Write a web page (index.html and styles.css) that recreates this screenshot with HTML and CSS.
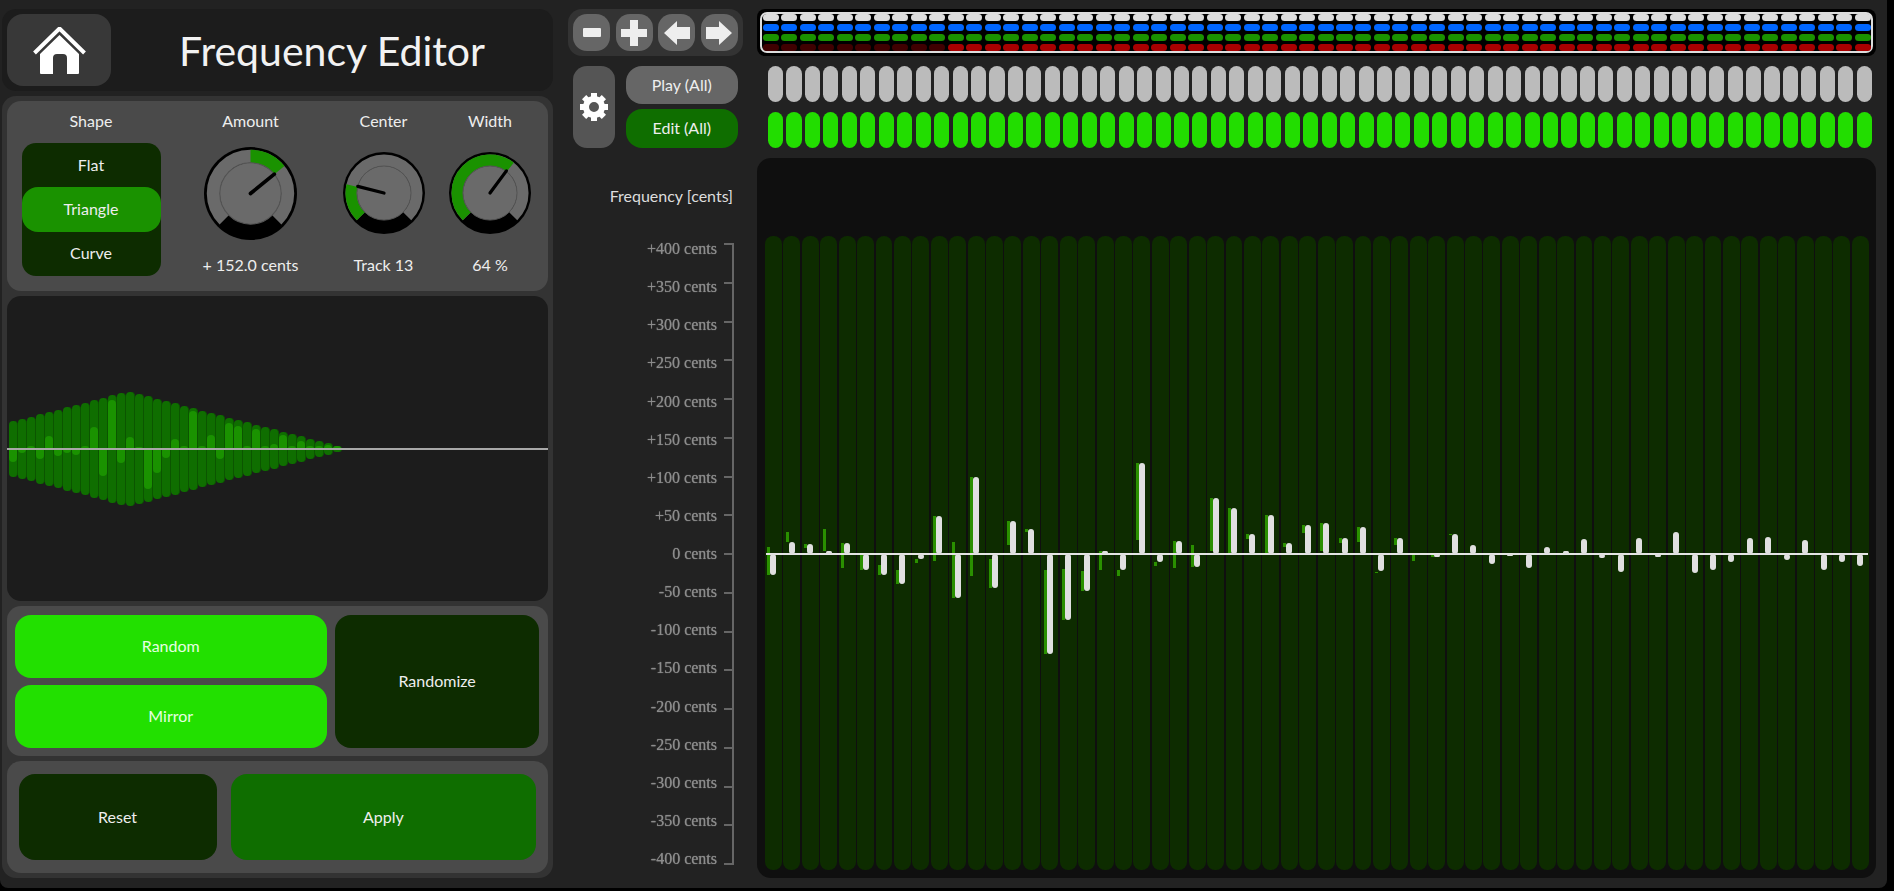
FILE: index.html
```html
<!DOCTYPE html>
<html lang="en">
<head>
<meta charset="utf-8">
<title>Frequency Editor</title>
<link rel="stylesheet" href="styles.css">
</head>
<body>
<div class="app">
  <aside class="left">
    <header class="head">
      <button class="home" aria-label="Home">
        <svg width="53" height="47" viewBox="0 0 53 47">
          <polyline class="roof" points="1.5,26 26.5,1.5 51.5,26"/>
          <path class="white" d="M7 27 L26.5 8 L46 27 V46 Q46 47 45 47 H34 V31 Q34 27 30 27 H24 Q20 27 20 31 V47 H8 Q7 47 7 46 Z"/>
        </svg>
      </button>
      <h1 class="title">Frequency Editor</h1>
    </header>
    <div class="stack">
      <section class="params">
        <div class="shape-col">
          <div class="lbl">Shape</div>
          <div class="shapes">
            <div class="shape">Flat</div>
            <div class="shape active">Triangle</div>
            <div class="shape">Curve</div>
          </div>
        </div>
        <div class="knob-col amount">
          <div class="lbl">Amount</div>
          <div class="knob-area">
            <svg class="knob big" viewBox="-50 -50 100 100">
              <circle class="k-base" r="50"/>
              <circle class="k-ring" r="40" pathLength="360" stroke-dasharray="270 90" transform="rotate(135)"/>
              <circle class="k-val" r="40" pathLength="360" stroke-dasharray="51 309" transform="rotate(-90)"/>
              <circle class="k-in" r="33"/>
              <line class="k-needle" x1="0" y1="0" x2="25.6" y2="-20.8"/>
            </svg>
          </div>
          <div class="lbl">+ 152.0 cents</div>
        </div>
        <div class="knob-col center">
          <div class="lbl">Center</div>
          <div class="knob-area">
            <svg class="knob small" viewBox="-50 -50 100 100">
              <circle class="k-base" r="50"/>
              <circle class="k-ring" r="40" pathLength="360" stroke-dasharray="270 90" transform="rotate(135)"/>
              <circle class="k-val" r="40" pathLength="360" stroke-dasharray="58 302" transform="rotate(135)"/>
              <circle class="k-in" r="33"/>
              <line class="k-needle" x1="0" y1="0" x2="-32" y2="-8"/>
            </svg>
          </div>
          <div class="lbl">Track 13</div>
        </div>
        <div class="knob-col width">
          <div class="lbl">Width</div>
          <div class="knob-area">
            <svg class="knob small" viewBox="-50 -50 100 100">
              <circle class="k-base" r="50"/>
              <circle class="k-ring" r="40" pathLength="360" stroke-dasharray="270 90" transform="rotate(135)"/>
              <circle class="k-val" r="40" pathLength="360" stroke-dasharray="173 187" transform="rotate(135)"/>
              <circle class="k-in" r="33"/>
              <line class="k-needle" x1="0" y1="0" x2="20" y2="-27"/>
            </svg>
          </div>
          <div class="lbl">64 %</div>
        </div>
      </section>
      <section class="wave" id="wave"><div class="wave-line"></div></section>
      <section class="random">
        <button class="btn bright">Random</button>
        <button class="btn dark tall">Randomize</button>
        <button class="btn bright">Mirror</button>
      </section>
      <section class="actions">
        <button class="btn dark reset">Reset</button>
        <button class="btn mid apply">Apply</button>
      </section>
    </div>
  </aside>

  <div class="middle">
    <div class="toolbar">
      <button class="tool" aria-label="Remove">
        <svg width="18" height="9" viewBox="0 0 18 9"><rect class="glyph" width="18" height="9" rx="1"/></svg>
      </button>
      <button class="tool" aria-label="Add">
        <svg width="26" height="26" viewBox="0 0 26 26"><path class="glyph" d="M9 0H17V9H26V17H17V26H9V17H0V9H9Z"/></svg>
      </button>
      <button class="tool" aria-label="Previous">
        <svg width="26" height="24" viewBox="0 0 26 24"><path class="glyph" d="M13 0V6H26V18H13V24L0 12Z"/></svg>
      </button>
      <button class="tool" aria-label="Next">
        <svg width="26" height="24" viewBox="0 0 26 24"><path class="glyph" d="M13 0V6H0V18H13V24L26 12Z"/></svg>
      </button>
    </div>
    <div class="modes">
      <button class="gear" aria-label="Settings">
        <svg width="28" height="28" viewBox="-14 -14 28 28">
          <g class="teeth">
            <rect x="-3" y="-14" width="6" height="6"/>
            <rect x="-3" y="-14" width="6" height="6" transform="rotate(45)"/>
            <rect x="-3" y="-14" width="6" height="6" transform="rotate(90)"/>
            <rect x="-3" y="-14" width="6" height="6" transform="rotate(135)"/>
            <rect x="-3" y="-14" width="6" height="6" transform="rotate(180)"/>
            <rect x="-3" y="-14" width="6" height="6" transform="rotate(225)"/>
            <rect x="-3" y="-14" width="6" height="6" transform="rotate(270)"/>
            <rect x="-3" y="-14" width="6" height="6" transform="rotate(315)"/>
          </g>
          <circle class="gear-ring" r="8"/>
        </svg>
      </button>
      <div class="mode-stack">
        <button class="mode play">Play (All)</button>
        <button class="mode edit">Edit (All)</button>
      </div>
    </div>
    <div class="axis-title">Frequency [cents]</div>
    <div class="axis">
      <div class="axis-labels" id="axisLabels"></div>
      <div class="axis-ticks" id="axisTicks"></div>
    </div>
  </div>

  <main class="right">
    <div class="overview">
      <div class="overview-in" id="overview"></div>
    </div>
    <div class="pills" id="playRow"></div>
    <div class="pills" id="editRow"></div>
    <div class="chart">
      <div class="tracks" id="tracks"><div class="zero"></div></div>
    </div>
  </main>
</div>
<script src="script.js"></script>
</body>
</html>
```

FILE: styles.css
```css
* { box-sizing: border-box; }
html, body { margin: 0; height: 100%; background: #000; overflow: hidden; }
body { font-family: "Lato", "Noto Sans", sans-serif; font-size: 16px; color: #eee; }
button { font: inherit; color: inherit; border: 0; padding: 0; cursor: pointer; }

.app { width: 1887px; height: 888px; background: #222; display: flex; padding-top: 9px; border-radius: 0 0 8px 8px; }

.left { width: 551px; flex: none; margin-left: 2px; display: flex; flex-direction: column; gap: 5px; }
.head { height: 82px; background: #1c1c1c; border-radius: 14px; display: flex; align-items: center; padding-left: 5px; }
.home { width: 104px; height: 72px; background: #383838; border-radius: 16px; display: flex; align-items: center; justify-content: center; }
.roof { fill: none; stroke: #fff; stroke-width: 4; }
.white { fill: #fff; }
.title { flex: 1; margin: 0; text-align: center; font-size: 41px; font-weight: 400; color: #f2f2f2; }

.stack { height: 782px; background: #333; border-radius: 14px; padding: 5px; display: flex; flex-direction: column; gap: 5px; }
.params { height: 190px; flex: none; background: #4a4a4a; border-radius: 14px; padding: 10px 0 0 14.5px; display: flex; }
.lbl { height: 20px; line-height: 20px; text-align: center; white-space: nowrap; }
.shape-col { width: 139px; }
.shapes { margin-top: 12px; height: 133px; background: #0d2c00; border-radius: 14px; display: grid; grid-template-rows: 1fr 1fr 1fr; }
.shape { display: flex; align-items: center; justify-content: center; border-radius: 14px; padding-bottom: 2px; }
.shape.active { background: #1a9200; border-radius: 16px; }
.knob-col { width: 90px; }
.knob-col.amount { width: 100px; margin-left: 40px; }
.knob-col.center { margin-left: 38px; }
.knob-col.width { margin-left: 16.5px; }
.knob-area { height: 124px; display: flex; align-items: center; justify-content: center; }
.knob { display: block; }
.knob.big { width: 93px; height: 93px; }
.knob.small { width: 82px; height: 82px; }
.k-base { fill: #000; }
.k-ring { fill: none; stroke: #6a6a6a; stroke-width: 14; }
.k-val { fill: none; stroke: #1a9200; stroke-width: 14; }
.k-in { fill: #6a6a6a; stroke: #555; stroke-width: 1.2; }
.k-needle { stroke: #000; stroke-width: 4; stroke-linecap: round; }

.wave { height: 305px; flex: none; background: #1c1c1c; border-radius: 14px; position: relative; display: flex; align-items: stretch; padding-left: 2px; }
.wave-cell { width: 9px; flex: none; position: relative; display: flex; align-items: center; justify-content: flex-start; }
.wave-env { width: 9px; border-radius: 4px; background: #0f6e00; border-right: 1px solid #0b5500; position: relative; }
.wave-val { position: absolute; left: 0; width: 8px; background: #1a9200; }
.wave-val.up { border-radius: 4px 4px 0 0; }
.wave-val.down { border-radius: 0 0 4px 4px; }
.wave-line { position: absolute; z-index: 1; left: 0; right: 0; top: 152px; height: 2px; background: #a8a8a8; }

.random { height: 150px; flex: none; background: #4a4a4a; border-radius: 14px; padding: 9px 8px 8px 7.5px; display: grid; grid-template-columns: 312.5px 204.7px; grid-template-rows: 63px 63px; gap: 7px 7.8px; }
.btn { border-radius: 16px; padding-bottom: 2px; }
.bright { background: #22e000; color: #e6ffe0; }
.dark { background: #0d2c00; }
.mid { background: #0f6e00; }
.tall { grid-row: span 2; }
.actions { height: 112px; flex: none; background: #4a4a4a; border-radius: 14px; padding: 13px 12.3px 13px 11.6px; display: flex; gap: 14.6px; }
.reset { width: 198px; }
.apply { flex: 1; }

.middle { width: 175px; flex: none; margin-left: 15px; }
.toolbar { height: 47px; background: #333; border-radius: 14px; padding: 5px; display: flex; justify-content: space-between; }
.tool { width: 37px; height: 37px; background: #666; border-radius: 14px; display: flex; align-items: center; justify-content: center; }
.glyph { fill: #eee; }
.modes { margin-top: 10px; padding: 0 5px; display: flex; gap: 10.5px; height: 82px; }
.gear { width: 42px; background: #555; border-radius: 14px; display: flex; align-items: center; justify-content: center; }
.teeth { fill: #fff; }
.gear-ring { fill: none; stroke: #fff; stroke-width: 6; }
.mode-stack { flex: 1; display: flex; flex-direction: column; gap: 5px; }
.mode { flex: 1; border-radius: 16px; }
.mode.play { background: #666; }
.mode.edit { background: #0f6e00; padding-bottom: 2px; }
.axis-title { margin-top: 38px; height: 20px; line-height: 20px; text-align: right; padding-right: 10px; color: #ddd; }
.axis { margin-top: 34px; height: 628px; display: flex; justify-content: flex-end; gap: 7px; padding-right: 9px; }
.axis-labels { display: flex; flex-direction: column; justify-content: space-between; align-items: flex-end; }
.axis-label { font-family: "Liberation Serif", serif; font-size: 16px; line-height: 18px; color: #8c8c8c; text-shadow: 0 0 1px #8c8c8c; filter: blur(0.6px); }
.axis-ticks { width: 10px; height: 622px; margin-top: 3px; border-right: 2px solid #666; display: flex; flex-direction: column; justify-content: space-between; }
.axis-tick { height: 2px; background: #666; }

.right { width: 1119px; flex: none; margin-left: 14px; display: flex; flex-direction: column; }
.overview { height: 47px; background: #000; border-radius: 8px; padding: 3px; flex: none; }
.overview-in { height: 41px; border: 2px solid #ddd; border-radius: 7px; padding: 0 0.5px; display: flex; flex-direction: column; gap: 3px; justify-content: flex-start; }
.ov-row { height: 7px; display: flex; gap: 2.5px; flex: none; }
.ov-cell { flex: 1; border-radius: 4px; }
.ov-gray { background: #ddd; }
.ov-blue { background: #0066ff; }
.ov-green { background: #1a9200; }
.ov-red { background: #a80000; }
.ov-red.off { background: #3f0000; }
.pills { height: 36px; margin: 10px 4.5px 0 11px; display: flex; gap: 3.4px; flex: none; }
.pill { flex: 1; border-radius: 8px; }
#playRow .pill { background: #bbb; }
#editRow .pill { background: #22dd00; }
.chart { margin-top: 10px; height: 720px; background: #0f0f0f; border-radius: 14px; padding: 78px 7px 8px 8px; flex: none; }
.tracks { height: 634px; display: flex; gap: 1.5px; position: relative; }
.track { flex: 1; background: #0d2c00; border-radius: 8px; position: relative; }
.zero { position: absolute; z-index: 2; left: 1px; right: 1px; top: 317px; height: 2px; background: #e4e4e4; }
.bar-w { position: absolute; z-index: 3; left: calc(50% - 3px); width: 6px; background: #e0e0e0; border-radius: 3px; }
.bar-g { position: absolute; z-index: 1; left: calc(50% - 6px); width: 3px; background: #2a9000; }
```

FILE: script.js
```javascript
var N = 60;

function el(cls, parent) {
  var d = document.createElement('div');
  d.className = cls;
  parent.appendChild(d);
  return d;
}

/* waveform preview */
var env = [28,30,32,35,37,39,42,44,46,49,51,54,56,57,55,53,50,48,46,43,41,38,36,34,31,29,27,24,22,20,17,15,13,10,8,6,3];
var val = [-13,-4,3,-10,13,-7,-4,-6,3,22,-27,49,-14,12,2,-40,-24,-9,10,3,38,3,14,-10,26,23,3,20,3,5,14,3,8,3,3,4,3];
var wave = document.getElementById('wave');
for (var i = 0; i < N; i++) {
  var cell = el('wave-cell', wave);
  if (i >= env.length) continue;
  var e = el('wave-env', cell);
  e.style.height = env[i] * 2 + 'px';
  var v = el('wave-val ' + (val[i] > 0 ? 'up' : 'down'), e);
  v.style.height = Math.abs(val[i]) + 'px';
  if (val[i] > 0) v.style.bottom = '50%'; else v.style.top = '50%';
}

/* axis */
var labels = document.getElementById('axisLabels');
var ticks = document.getElementById('axisTicks');
for (var c = 400; c >= -400; c -= 50) {
  el('axis-label', labels).textContent = (c > 0 ? '+' + c : c) + ' cents';
  el('axis-tick', ticks);
}

/* overview strip */
var ov = document.getElementById('overview');
['gray', 'blue', 'green', 'red'].forEach(function (name) {
  var row = el('ov-row', ov);
  for (var i = 0; i < N; i++) {
    el('ov-cell ov-' + name + (name === 'red' && i < 10 ? ' off' : ''), row);
  }
});

/* play / edit pills */
['playRow', 'editRow'].forEach(function (id) {
  var row = document.getElementById(id);
  for (var i = 0; i < N; i++) el('pill', row);
});

/* frequency bars: px above (+) or below (-) the zero line */
var white = [-21,12,10,3,11,-16,-21,-30,-5,38,-44,77,-34,33,25,-100,-66,-37,3,-16,91,-8,13,-13,56,46,20,39,11,29,31,16,27,-17,16,0,-3,20,9,-10,-2,-14,7,3,15,-4,-18,16,-3,22,-19,-16,-8,16,17,-6,14,-16,-8,-12];
var green = [[7,-21],[22,12],[10,6],[25,3],[11,-14],[0,-16],[-11,-21],[-16,-30],[-5,-9],[38,-7],[12,-44],[77,-22],[-5,-34],[33,9],[25,22],[-16,-100],[-15,-66],[-17,-37],[3,-16],[-16,-22],[91,14],[-8,-12],[13,-14],[9,-13],[56,3],[46,1],[20,15],[39,0],[11,7],[29,21],[31,3],[16,11],[27,12],[-18,-19],[16,9],[-1,-7],[-1,-3],[20,19]];
var tracks = document.getElementById('tracks');
var ZERO = 318;
for (var t = 0; t < N; t++) {
  var tr = el('track', tracks);
  if (green[t]) {
    var g = el('bar-g', tr);
    g.style.top = (ZERO - green[t][0]) + 'px';
    g.style.height = (green[t][0] - green[t][1]) + 'px';
  }
  if (white[t] !== 0) {
    var w = el('bar-w', tr);
    var hi = Math.max(white[t], 0), lo = Math.min(white[t], 0);
    w.style.top = (ZERO - hi) + 'px';
    w.style.height = (hi - lo) + 'px';
  }
}
```
